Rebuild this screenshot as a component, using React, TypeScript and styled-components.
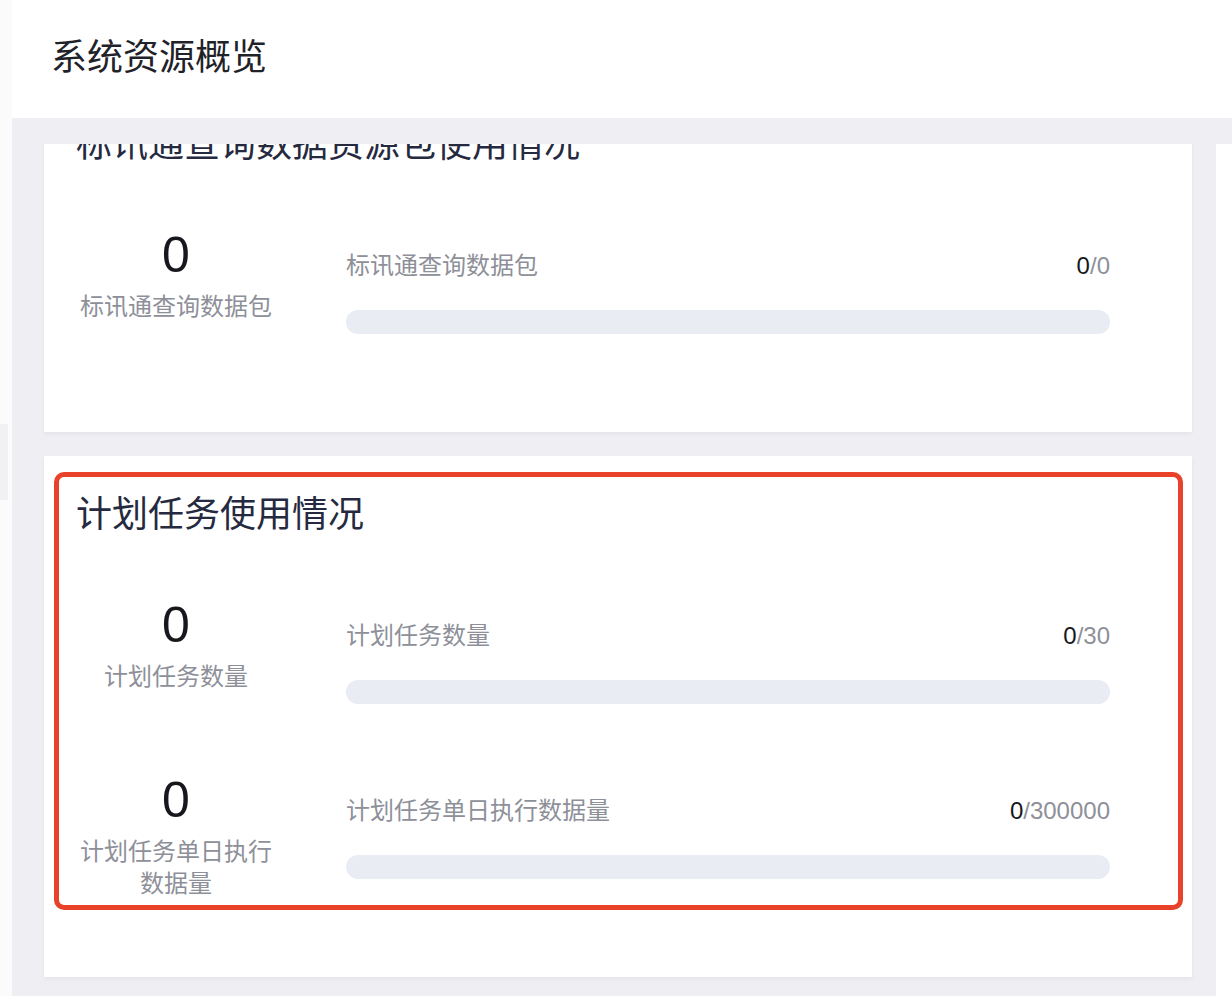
import React, { useLayoutEffect, useRef } from "react";
import styled, { createGlobalStyle } from "styled-components";

const GlobalStyle = createGlobalStyle`
  html, body {
    margin: 0;
    padding: 0;
    background: #ffffff;
  }
  body {
    font-family: "Noto Sans CJK SC", "Noto Sans", sans-serif;
    -webkit-font-smoothing: antialiased;
  }
  * { box-sizing: border-box; }
`;

const Page = styled.div`
  display: flex;
  width: 100%;
  height: 100vh;
  overflow: hidden;
`;

const Sidebar = styled.aside`
  width: 12px;
  flex-shrink: 0;
  background: #fbfbfc;
  display: flex;
  flex-direction: column;
`;

const SidebarItem = styled.div`
  margin-top: 424px;
  width: 8px;
  height: 76px;
  background: #f1f1f4;
`;

const Main = styled.main`
  flex: 1;
  min-width: 0;
  display: flex;
  flex-direction: column;
  background: #eeeef3;
`;

const Header = styled.header`
  height: 118px;
  flex-shrink: 0;
  background: #ffffff;
  padding: 29px 0 0 39px;
  margin-bottom: 26px;
`;

const PageTitle = styled.h1`
  margin: 0;
  font-size: 36px;
  line-height: 50px;
  font-weight: 400;
  color: #1f2329;
`;

const Scroller = styled.div`
  flex: 1;
  min-height: 0;
  overflow: hidden;
  display: flex;
  flex-direction: column;
  gap: 24px;
  padding: 0 24px 40px 32px;
  border-right: 16px solid #ffffff;
`;

const Card = styled.section`
  position: relative;
  flex-shrink: 0;
  background: #ffffff;
  padding: 30px 82px 30px 34px;
  box-shadow: 0 2px 4px rgba(30, 35, 60, 0.05);
`;

const CardTitle = styled.h2`
  margin: 0 0 61px -2px;
  font-size: 36px;
  line-height: 50px;
  font-weight: 400;
  color: #262a40;
  white-space: nowrap;
`;

const Row = styled.div`
  display: flex;
  gap: 72px;
  height: 175px;
`;

const LeftCol = styled.div`
  width: 196px;
  flex-shrink: 0;
  display: flex;
  flex-direction: column;
  align-items: center;
  text-align: center;
`;

const BigNum = styled.div`
  font-family: "Liberation Sans", "Noto Sans", sans-serif;
  font-size: 50px;
  line-height: 56px;
  color: #16181d;
`;

const StatLabel = styled.div`
  margin-top: 6px;
  font-size: 24px;
  line-height: 32px;
  color: #8e9099;
`;

const MidCol = styled.div`
  flex: 1;
  min-width: 0;
  padding-top: 21px;
`;

const MidHead = styled.div`
  display: flex;
  justify-content: space-between;
  align-items: baseline;
`;

const MidLabel = styled.span`
  font-size: 24px;
  line-height: 32px;
  color: #8e9099;
`;

const Value = styled.span`
  font-family: "Liberation Sans", "Noto Sans", sans-serif;
  font-size: 24px;
  line-height: 32px;
  color: #8e9099;
`;

const Current = styled.span`
  color: #16181d;
`;

const Bar = styled.div`
  margin-top: 28px;
  height: 24px;
  border-radius: 12px;
  background: #e9ecf3;
  overflow: hidden;
`;

const BarFill = styled.div`
  height: 100%;
  background: #3b6cf6;
  border-radius: 12px;
`;

const Highlight = styled.div`
  position: absolute;
  top: 16px;
  left: 10px;
  right: 9px;
  bottom: 67px;
  border: 5px solid #e8432a;
  border-radius: 10px;
  pointer-events: none;
`;

type Stat = {
  label: string;
  used: number;
  total: number;
};

const StatRow: React.FC<{ stat: Stat }> = ({ stat }) => {
  const pct = stat.total > 0 ? (stat.used / stat.total) * 100 : 0;
  return (
    <Row>
      <LeftCol>
        <BigNum>{stat.used}</BigNum>
        <StatLabel>{stat.label}</StatLabel>
      </LeftCol>
      <MidCol>
        <MidHead>
          <MidLabel>{stat.label}</MidLabel>
          <Value>
            <Current>{stat.used}</Current>/{stat.total}
          </Value>
        </MidHead>
        <Bar>
          <BarFill style={{ width: `${pct}%` }} />
        </Bar>
      </MidCol>
    </Row>
  );
};

const sections: { title: string; stats: Stat[]; highlighted?: boolean }[] = [
  {
    title: "标讯通查询数据资源包使用情况",
    stats: [{ label: "标讯通查询数据包", used: 0, total: 0 }],
  },
  {
    title: "计划任务使用情况",
    highlighted: true,
    stats: [
      { label: "计划任务数量", used: 0, total: 30 },
      { label: "计划任务单日执行数据量", used: 0, total: 300000 },
    ],
  },
];

export default function App() {
  const scrollRef = useRef<HTMLDivElement>(null);
  useLayoutEffect(() => {
    if (scrollRef.current) scrollRef.current.scrollTop = 58;
  }, []);

  return (
    <>
      <GlobalStyle />
      <Page>
        <Sidebar>
          <SidebarItem />
        </Sidebar>
        <Main>
          <Header>
            <PageTitle>系统资源概览</PageTitle>
          </Header>
          <Scroller ref={scrollRef}>
            {sections.map((s) => (
              <Card key={s.title}>
                <CardTitle>{s.title}</CardTitle>
                {s.stats.map((st) => (
                  <StatRow key={st.label} stat={st} />
                ))}
                {s.highlighted && <Highlight />}
              </Card>
            ))}
          </Scroller>
        </Main>
      </Page>
    </>
  );
}
